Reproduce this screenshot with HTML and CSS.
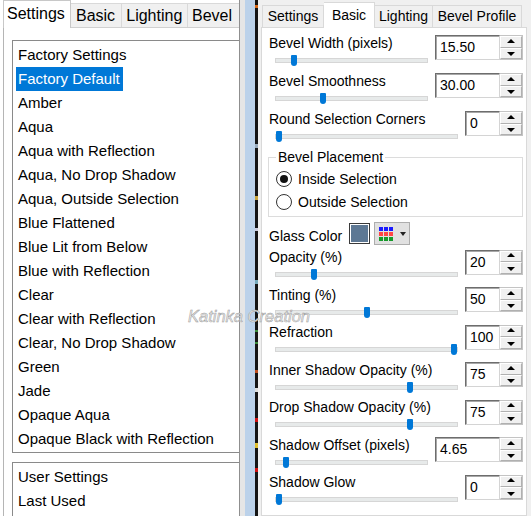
FILE: index.html
```html
<!DOCTYPE html>
<html>
<head>
<meta charset="utf-8">
<link rel="stylesheet" href="styles.css">
</head>
<body>
<div class="screen">
  <div class="left">
    <div class="ltabs">
      <div class="ltab sel t-settings">Settings</div>
      <div class="ltab t-basic">Basic</div>
      <div class="ltab t-lighting">Lighting</div>
      <div class="ltab t-bevel">Bevel</div>
    </div>
    <div class="lpage">
      <ul class="list main">
        <li><span>Factory Settings</span></li>
        <li><span class="on">Factory Default</span></li>
        <li><span>Amber</span></li>
        <li><span>Aqua</span></li>
        <li><span>Aqua with Reflection</span></li>
        <li><span>Aqua, No Drop Shadow</span></li>
        <li><span>Aqua, Outside Selection</span></li>
        <li><span>Blue Flattened</span></li>
        <li><span>Blue Lit from Below</span></li>
        <li><span>Blue with Reflection</span></li>
        <li><span>Clear</span></li>
        <li><span>Clear with Reflection</span></li>
        <li><span>Clear, No Drop Shadow</span></li>
        <li><span>Green</span></li>
        <li><span>Jade</span></li>
        <li><span>Opaque Aqua</span></li>
        <li><span>Opaque Black with Reflection</span></li>
      </ul>
      <ul class="list user">
        <li><span>User Settings</span></li>
        <li><span>Last Used</span></li>
      </ul>
    </div>
  </div>
  <div class="gap"></div>
  <div class="frame"></div>
  <div class="strip"></div>
  <div class="right">
    <div class="rtabs">
      <div class="rtab r-settings">Settings</div>
      <div class="rtab sel r-basic">Basic</div>
      <div class="rtab r-lighting">Lighting</div>
      <div class="rtab r-bevel">Bevel Profile</div>
    </div>
    <div class="rpage">
      <div class="row">
        <div class="ctl wide"><div class="lbl">Bevel Width (pixels)</div><div class="slider"><div class="track"></div><div class="thumb" style="left:16px"></div></div></div>
        <div class="spin"><div class="val w">15.50</div><div class="btns"><div class="up"></div><div class="dn"></div></div></div>
      </div>
      <div class="row">
        <div class="ctl"><div class="lbl">Bevel Smoothness</div><div class="slider"><div class="track"></div><div class="thumb" style="left:45px"></div></div></div>
        <div class="spin"><div class="val w">30.00</div><div class="btns"><div class="up"></div><div class="dn"></div></div></div>
      </div>
      <div class="row">
        <div class="ctl"><div class="lbl">Round Selection Corners</div><div class="slider"><div class="track"></div><div class="thumb" style="left:1px"></div></div></div>
        <div class="spin"><div class="val n">0</div><div class="btns"><div class="up"></div><div class="dn"></div></div></div>
      </div>
      <fieldset class="group">
        <legend>Bevel Placement</legend>
        <div class="radio"><span class="circle on"></span>Inside Selection</div>
        <div class="radio"><span class="circle"></span>Outside Selection</div>
      </fieldset>
      <div class="glass">
        <span class="glbl">Glass Color</span>
        <span class="swatch"><span class="fill"></span></span>
        <span class="picker">
          <span class="grid">
            <i class="b"></i><i class="b"></i><i class="b"></i>
            <i class="r"></i><i class="r"></i><i class="r"></i>
            <i class="g"></i><i class="g"></i><i class="g"></i>
          </span>
          <span class="arrow"></span>
        </span>
      </div>
      <div class="row b">
        <div class="ctl"><div class="lbl">Opacity (%)</div><div class="slider"><div class="track"></div><div class="thumb" style="left:36px"></div></div></div>
        <div class="spin"><div class="val n">20</div><div class="btns"><div class="up"></div><div class="dn"></div></div></div>
      </div>
      <div class="row b">
        <div class="ctl"><div class="lbl">Tinting (%)</div><div class="slider"><div class="track"></div><div class="thumb" style="left:89px"></div></div></div>
        <div class="spin"><div class="val n">50</div><div class="btns"><div class="up"></div><div class="dn"></div></div></div>
      </div>
      <div class="row b">
        <div class="ctl"><div class="lbl">Refraction</div><div class="slider"><div class="track"></div><div class="thumb" style="left:176px"></div></div></div>
        <div class="spin"><div class="val n">100</div><div class="btns"><div class="up"></div><div class="dn"></div></div></div>
      </div>
      <div class="row b">
        <div class="ctl"><div class="lbl">Inner Shadow Opacity (%)</div><div class="slider"><div class="track"></div><div class="thumb" style="left:132px"></div></div></div>
        <div class="spin"><div class="val n">75</div><div class="btns"><div class="up"></div><div class="dn"></div></div></div>
      </div>
      <div class="row b">
        <div class="ctl"><div class="lbl">Drop Shadow Opacity (%)</div><div class="slider"><div class="track"></div><div class="thumb" style="left:132px"></div></div></div>
        <div class="spin"><div class="val n">75</div><div class="btns"><div class="up"></div><div class="dn"></div></div></div>
      </div>
      <div class="row b">
        <div class="ctl"><div class="lbl">Shadow Offset (pixels)</div><div class="slider"><div class="track"></div><div class="thumb" style="left:8px"></div></div></div>
        <div class="spin"><div class="val w">4.65</div><div class="btns"><div class="up"></div><div class="dn"></div></div></div>
      </div>
      <div class="row b">
        <div class="ctl"><div class="lbl">Shadow Glow</div><div class="slider"><div class="track"></div><div class="thumb" style="left:1px"></div></div></div>
        <div class="spin"><div class="val n">0</div><div class="btns"><div class="up"></div><div class="dn"></div></div></div>
      </div>
    </div>
  </div>
  <div class="watermark">Katinka Creation</div>
</div>
</body>
</html>
```

FILE: styles.css
```css
* { box-sizing: border-box; }
body {
  margin: 0;
  font-family: "Liberation Sans", Arial, sans-serif;
  color: #000;
}
.screen {
  position: relative;
  display: flex;
  width: 531px;
  height: 516px;
  overflow: hidden;
  background: #fff;
}

/* ---------- left panel ---------- */
.left {
  width: 240px;
  border-right: 1px solid #8f8f8f;
  padding-left: 3px;
  display: flex;
  flex-direction: column;
  background: #fff;
}
.ltabs {
  display: flex;
  align-items: flex-end;
  height: 29px;
  font-size: 16px;
}
.ltab {
  height: 24px;
  line-height: 23px;
  background: #f0f0f0;
  border: 1px solid #d9d9d9;
  border-bottom: 0;
  border-left: 0;
  text-align: center;
  white-space: nowrap;
  overflow: hidden;
}
.ltab.sel {
  height: 28px;
  margin-bottom: -1px;
  background: #fff;
  border-left: 1px solid #b5b5b5;
  border-color: #c8c8c8;
  text-align: left;
  padding-left: 3px;
  line-height: 26px;
  position: relative;
  z-index: 1;
}
.t-settings { width: 69px; }
.t-basic { width: 52px; }
.t-lighting { width: 68px; }
.t-bevel { width: 52px; text-align: left; padding-left: 4px; border-right: 0; }

.lpage {
  flex: 1;
  border-top: 1px solid #d0d0d0;
  border-left: 1px solid #b5b5b5;
  padding-top: 12px;
  padding-left: 8px;
}
.list {
  list-style: none;
  margin: 0;
  border: 1px solid #8a8a8a;
  border-right: 0;
  font-size: 15px;
}
.list.main { padding: 2px 0 1px; }
.list.user { margin-top: 9px; padding: 2px 0 0; height: 60px; }
.list li {
  height: 24px;
  line-height: 24px;
  white-space: nowrap;
}
.list span {
  display: inline-block;
  margin-left: 3px;
  padding: 0 3px 0 2px;
}
.list span.on {
  background: #0078d7;
  color: #fff;
}

/* ---------- divider ---------- */
.gap { width: 5px; background: #e6e6e6; }
.frame { width: 10px; background: #bcd2ea; }
.strip {
  width: 3px;
  background: linear-gradient(to bottom,
    #111 0 5px, #d86a1a 5px 8px, #151515 8px 144px, #9ab 144px 148px,
    #151515 148px 196px, #c9a43a 196px 200px, #151515 200px 228px, #ccd 228px 231px,
    #151515 231px 280px, #7ab 280px 284px, #151515 284px 330px, #3a8a3a 330px 332px,
    #151515 332px 342px, #3a8a3a 342px 344px, #151515 344px 370px, #c05020 370px 373px,
    #151515 373px 388px, #ddd 388px 392px, #151515 392px 418px, #d01010 418px 422px,
    #151515 422px 443px, #e0c030 443px 448px, #151515 448px 468px, #d01010 468px 472px,
    #151515 472px);
}

/* ---------- right panel ---------- */
.right {
  width: 273px;
  background: #f0f0f0;
  display: flex;
  flex-direction: column;
}
.rtabs {
  display: flex;
  align-items: flex-end;
  height: 27px;
  padding-left: 4px;
  font-size: 14px;
}
.rtab {
  height: 22px;
  line-height: 21px;
  border: 1px solid #d9d9d9;
  border-bottom: 0;
  border-left: 0;
  background: #f0f0f0;
  text-align: center;
  white-space: nowrap;
}
.rtab.r-settings { border-left: 1px solid #d9d9d9; }
.rtab.sel {
  height: 26px;
  margin-bottom: -1px;
  background: #fff;
  line-height: 24px;
  position: relative;
  z-index: 1;
}
.r-settings { width: 62px; }
.r-basic { width: 51px; }
.r-lighting { width: 58px; }
.r-bevel { width: 89px; }

.rpage {
  flex: 1;
  margin-left: 3px;
  width: 266px;
  background: #fff;
  border: 1px solid #d9d9d9;
  padding: 6.5px 3px 0 7px;
  font-size: 14px;
}
.row {
  display: flex;
  align-items: flex-start;
  height: 38px;
}
.row.b { height: 37.5px; }
.ctl { flex: 1; min-width: 0; }
.lbl {
  height: 17px;
  line-height: 17px;
  white-space: nowrap;
}
.slider {
  position: relative;
  height: 16px;
  margin: 0 7px 0 6px;
}
.track {
  position: absolute;
  left: 0;
  right: 0;
  top: 6px;
  height: 5px;
  background: #e7eaea;
  border: 1px solid #d6d6d6;
}
.thumb {
  position: absolute;
  top: 3px;
  width: 6px;
  height: 11px;
  background: #0078d7;
  border-radius: 1px 1px 3px 3px;
}
.spin {
  display: flex;
  height: 25px;
  margin-top: 0.5px;
}
.val {
  height: 25px;
  line-height: 22px;
  padding-left: 4px;
  border: 1px solid;
  border-color: #6d6d6d #d4d4d4 #d4d4d4 #6d6d6d;
  box-shadow: inset 1px 1px 0 #a8a8a8;
  background: #fff;
}
.val.w { width: 65px; }
.val.n { width: 35px; }
.btns {
  width: 23px;
  display: flex;
  flex-direction: column;
  border: 1px solid #c4c4c4;
  border-left: 0;
}
.btns .up, .btns .dn {
  flex: 1;
  position: relative;
  background: #f0f0f0;
  border: 1px solid #fff;
  border-right-color: #b0b0b0;
  border-bottom-color: #b0b0b0;
}
.btns .up::after, .btns .dn::after {
  content: "";
  position: absolute;
  left: 50%;
  top: 50%;
  margin-left: -4px;
  border-left: 4px solid transparent;
  border-right: 4px solid transparent;
}
.btns .up::after { margin-top: -3px; border-bottom: 4px solid #000; }
.btns .dn::after { margin-top: -1px; border-top: 4px solid #000; }

/* group box */
.group {
  margin: 0 0 0 -1px;
  padding: 0 0 2.5px 7px;
  border: 1px solid #dcdcdc;
  min-width: 0;
}
.group legend {
  padding: 0 2px;
  margin-left: 0;
  line-height: 17px;
}
.radio {
  display: flex;
  align-items: center;
  height: 23px;
}
.radio:first-of-type { margin-top: 2px; }
.circle {
  width: 16px;
  height: 16px;
  border: 1px solid #333;
  border-radius: 50%;
  margin-right: 6px;
  display: flex;
  align-items: center;
  justify-content: center;
  background: #fff;
}
.circle.on::after {
  content: "";
  width: 8px;
  height: 8px;
  border-radius: 50%;
  background: #111;
}

/* glass color */
.glass {
  display: flex;
  align-items: center;
  height: 32px;
  padding-top: 1px;
}
.glbl { padding-top: 5px; }
.swatch {
  margin-left: 7px;
  width: 21px;
  height: 21px;
  border: 1px solid #3a3a3a;
  padding: 1px;
  background: #fff;
  display: flex;
}
.swatch .fill { flex: 1; background: #5d7894; }
.picker {
  margin-left: 4px;
  width: 36px;
  height: 23px;
  background: #e1e1e1;
  border: 1px solid #adadad;
  display: flex;
  align-items: center;
  padding-left: 4px;
}
.grid {
  display: grid;
  grid-template-columns: repeat(3, 4px);
  grid-template-rows: repeat(3, 4px);
  gap: 1px;
}
.grid i { display: block; }
.grid .b { background: #1a1aff; }
.grid .r { background: #ff4545; }
.grid .g { background: #159a2a; }
.arrow {
  margin-left: 7px;
  margin-top: 1px;
  border-left: 3.5px solid transparent;
  border-right: 3.5px solid transparent;
  border-top: 4px solid #222;
}

/* watermark overlay */
.watermark {
  position: absolute;
  left: 188px;
  top: 306px;
  font-size: 16.5px;
  line-height: 20px;
  font-style: italic;
  color: #ececec;
  -webkit-text-stroke: 0.5px #9a9a9a;
  white-space: nowrap;
  pointer-events: none;
}
```
